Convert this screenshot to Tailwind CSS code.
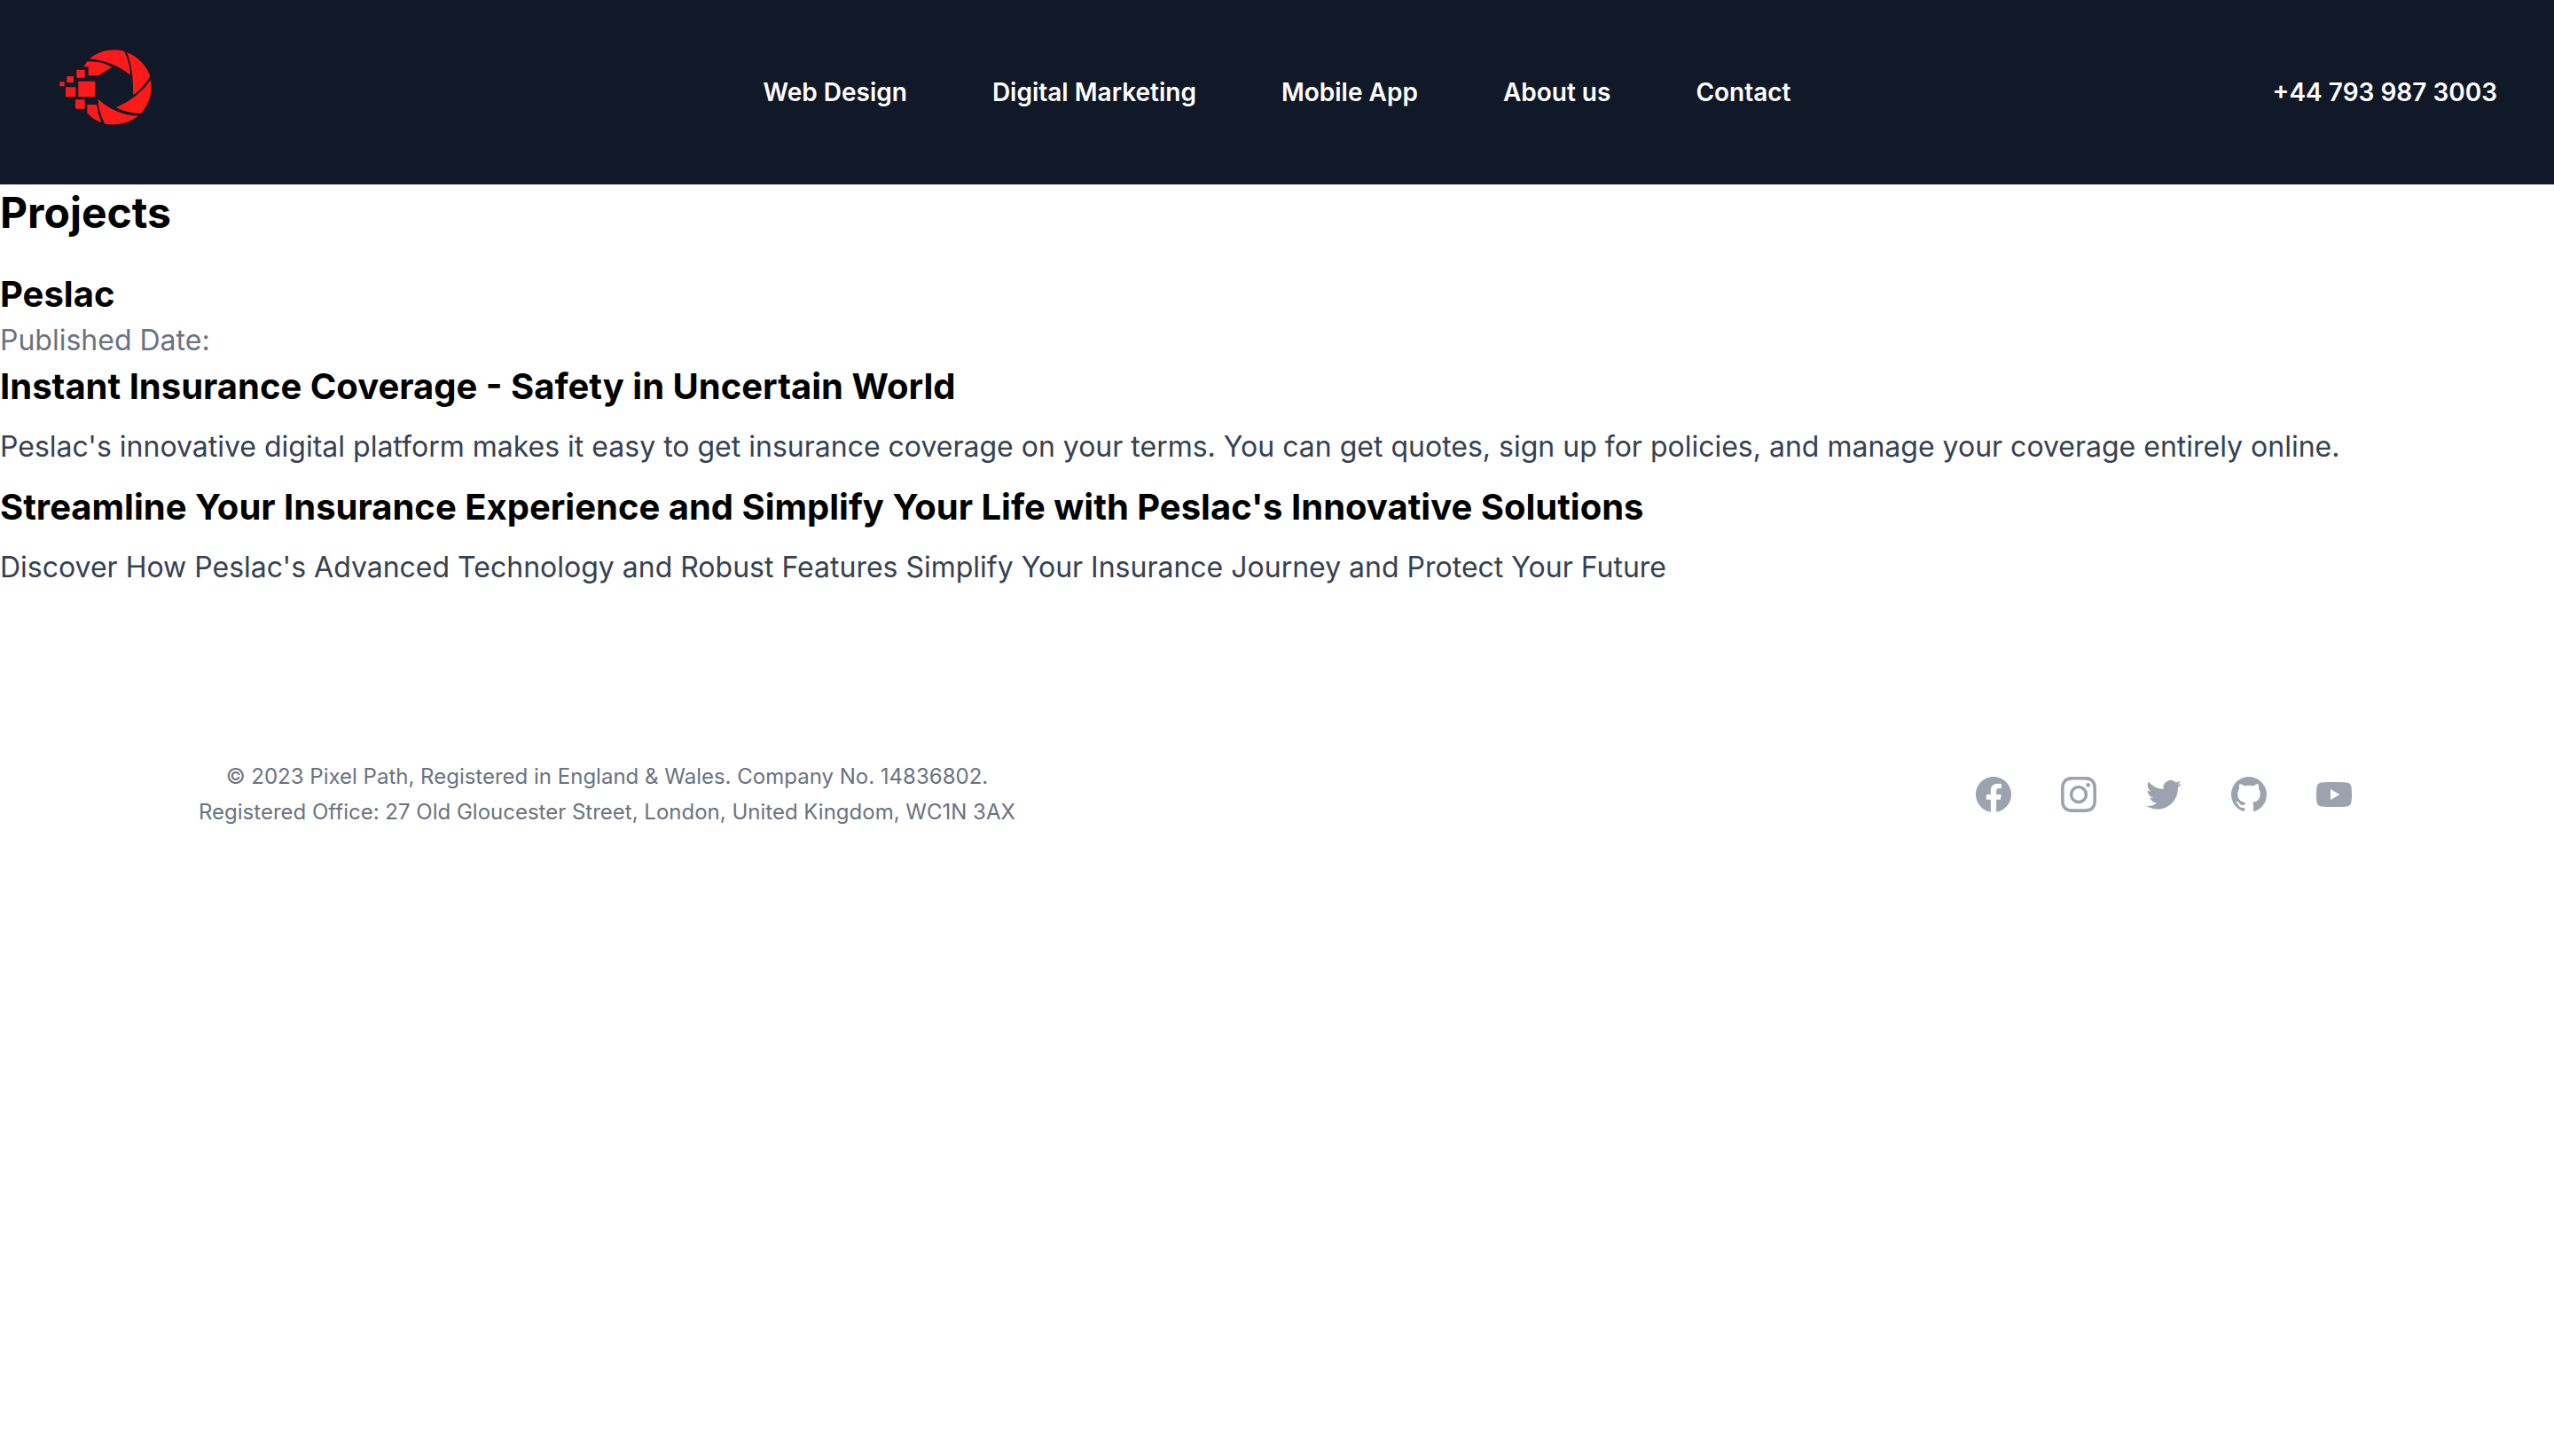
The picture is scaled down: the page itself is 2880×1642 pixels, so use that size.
<!DOCTYPE html>
<html lang="en">
<head>
<meta charset="utf-8">
<meta name="viewport" content="width=device-width, initial-scale=1">
<title>Pixel Path – Projects</title>
<script src="https://cdn.jsdelivr.net/npm/@tailwindcss/browser@4"></script>
</head>
<body class="bg-white font-['Inter',sans-serif] text-[32px] leading-[48px] text-black">
<header class="bg-[#111827]">
  <nav aria-label="Global" class="flex items-center justify-between px-16 py-12">
    <div class="flex flex-1">
      <a href="#" aria-label="Pixel Path">
        <svg class="h-28 w-28" viewBox="42 24 336 336" fill="#ff1a1a" aria-hidden="true">
          <path d="M153 79C180 55 215 47 245 49Q258 50 270 53Q289 90 291 134Q233 87 153 79Z"/>
          <path d="M279 57Q335 79 358 137Q335 178 300 202Q302 110 279 57Z"/>
          <path d="M360 151Q370 210 328 264Q285 265 243 244Q315 213 360 151Z"/>
          <path d="M182 215Q240 269 318 272Q270 309 205 299Q182 255 182 215Z"/>
          <path d="M145 234H177Q181 267 193 295Q164 284 145 262Z"/>
          <path d="M145 88Q190 86 229 107L182 136H149V106H133Z"/>
          <path d="M109 116h28v27h-28zM76 138h23v21h-23zM52 157h16v15h-16zM72 175h34v33h-34zM115 155h57v53h-57zM105 217h32v31h-32z"/>
        </svg>
      </a>
    </div>
    <div class="flex gap-24 text-[28px] leading-[48px] font-semibold text-white">
      <a href="#">Web Design</a>
      <a href="#">Digital Marketing</a>
      <a href="#">Mobile App</a>
      <a href="#">About us</a>
      <a href="#">Contact</a>
    </div>
    <div class="flex flex-1 justify-end">
      <a href="tel:+447939873003" class="text-[28px] leading-[48px] font-semibold text-white">+44 793 987 3003</a>
    </div>
  </nav>
</header>

<main>
  <h1 class="mb-8 text-[48px] leading-[64px] font-bold">Projects</h1>
  <article class="mb-24">
    <h2 class="text-[40px] leading-[56px] font-bold">Peslac</h2>
    <p class="text-[#6b7280]">Published Date:</p>
    <h3 class="text-[40px] leading-[56px] font-bold">Instant Insurance Coverage - Safety in Uncertain World</h3>
    <p class="my-4 text-[#374151]">Peslac's innovative digital platform makes it easy to get insurance coverage on your terms. You can get quotes, sign up for policies, and manage your coverage entirely online.</p>
    <h3 class="text-[40px] leading-[56px] font-bold">Streamline Your Insurance Experience and Simplify Your Life with Peslac's Innovative Solutions</h3>
    <p class="mt-4 text-[#374151]">Discover How Peslac's Advanced Technology and Robust Features Simplify Your Insurance Journey and Protect Your Future</p>
  </article>
</main>

<footer class="mx-auto flex max-w-[2560px] items-center justify-between px-16 py-24">
  <p class="text-center text-[24px] leading-[40px] text-[#6b7280]">© 2023 Pixel Path, Registered in England &amp; Wales. Company No. 14836802.<br>Registered Office: 27 Old Gloucester Street, London, United Kingdom, WC1N 3AX</p>
  <div class="flex gap-12 text-[#9ca3af]">
    <a href="#" aria-label="Facebook"><svg class="h-12 w-12" fill="currentColor" viewBox="0 0 24 24" aria-hidden="true"><path fill-rule="evenodd" d="M22 12c0-5.523-4.477-10-10-10S2 6.477 2 12c0 4.991 3.657 9.128 8.438 9.878v-6.987h-2.54V12h2.54V9.797c0-2.506 1.492-3.89 3.777-3.89 1.094 0 2.238.195 2.238.195v2.46h-1.26c-1.243 0-1.63.771-1.63 1.562V12h2.773l-.443 2.89h-2.33v6.988C18.343 21.128 22 16.991 22 12z" clip-rule="evenodd"/></svg></a>
    <a href="#" aria-label="Instagram"><svg class="h-12 w-12" fill="currentColor" viewBox="0 0 24 24" aria-hidden="true"><path fill-rule="evenodd" d="M12.315 2c2.43 0 2.784.013 3.808.06 1.064.049 1.791.218 2.427.465a4.902 4.902 0 011.772 1.153 4.902 4.902 0 011.153 1.772c.247.636.416 1.363.465 2.427.048 1.067.06 1.407.06 4.123v.08c0 2.643-.012 2.987-.06 4.043-.049 1.064-.218 1.791-.465 2.427a4.902 4.902 0 01-1.153 1.772 4.902 4.902 0 01-1.772 1.153c-.636.247-1.363.416-2.427.465-1.067.048-1.407.06-4.123.06h-.08c-2.643 0-2.987-.012-4.043-.06-1.064-.049-1.791-.218-2.427-.465a4.902 4.902 0 01-1.772-1.153 4.902 4.902 0 01-1.153-1.772c-.247-.636-.416-1.363-.465-2.427-.047-1.024-.06-1.379-.06-3.808v-.63c0-2.43.013-2.784.06-3.808.049-1.064.218-1.791.465-2.427a4.902 4.902 0 011.153-1.772A4.902 4.902 0 015.45 2.525c.636-.247 1.363-.416 2.427-.465C8.901 2.013 9.256 2 11.685 2h.63zm-.081 1.802h-.468c-2.456 0-2.784.011-3.807.058-.975.045-1.504.207-1.857.344-.467.182-.8.398-1.15.748-.35.35-.566.683-.748 1.15-.137.353-.3.882-.344 1.857-.047 1.023-.058 1.351-.058 3.807v.468c0 2.456.011 2.784.058 3.807.045.975.207 1.504.344 1.857.182.466.399.8.748 1.15.35.35.683.566 1.15.748.353.137.882.3 1.857.344 1.054.048 1.37.058 4.041.058h.08c2.597 0 2.917-.01 3.96-.058.976-.045 1.505-.207 1.858-.344.466-.182.8-.398 1.15-.748.35-.35.566-.683.748-1.15.137-.353.3-.882.344-1.857.048-1.055.058-1.37.058-4.041v-.08c0-2.597-.01-2.917-.058-3.96-.045-.976-.207-1.505-.344-1.858a3.097 3.097 0 00-.748-1.15 3.098 3.098 0 00-1.15-.748c-.353-.137-.882-.3-1.857-.344-1.023-.047-1.351-.058-3.807-.058zM12 6.865a5.135 5.135 0 110 10.27 5.135 5.135 0 010-10.27zm0 1.802a3.333 3.333 0 100 6.666 3.333 3.333 0 000-6.666zm5.338-3.205a1.2 1.2 0 110 2.4 1.2 1.2 0 010-2.4z" clip-rule="evenodd"/></svg></a>
    <a href="#" aria-label="Twitter"><svg class="h-12 w-12" fill="currentColor" viewBox="0 0 24 24" aria-hidden="true"><path d="M8.29 20.251c7.547 0 11.675-6.253 11.675-11.675 0-.178 0-.355-.012-.53A8.348 8.348 0 0022 5.92a8.19 8.19 0 01-2.357.646 4.118 4.118 0 001.804-2.27 8.224 8.224 0 01-2.605.996 4.107 4.107 0 00-6.993 3.743 11.65 11.65 0 01-8.457-4.287 4.106 4.106 0 001.27 5.477A4.072 4.072 0 012.8 9.713v.052a4.105 4.105 0 003.292 4.022 4.095 4.095 0 01-1.853.07 4.108 4.108 0 003.834 2.85A8.233 8.233 0 012 18.407a11.616 11.616 0 006.29 1.84"/></svg></a>
    <a href="#" aria-label="GitHub"><svg class="h-12 w-12" fill="currentColor" viewBox="0 0 24 24" aria-hidden="true"><path fill-rule="evenodd" d="M12 2C6.477 2 2 6.484 2 12.017c0 4.425 2.865 8.18 6.839 9.504.5.092.682-.217.682-.483 0-.237-.008-.868-.013-1.703-2.782.605-3.369-1.343-3.369-1.343-.454-1.158-1.11-1.466-1.11-1.466-.908-.62.069-.608.069-.608 1.003.07 1.531 1.032 1.531 1.032.892 1.53 2.341 1.088 2.91.832.092-.647.35-1.088.636-1.338-2.22-.253-4.555-1.113-4.555-4.951 0-1.093.39-1.988 1.029-2.688-.103-.253-.446-1.272.098-2.65 0 0 .84-.27 2.75 1.026A9.564 9.564 0 0112 6.844c.85.004 1.705.115 2.504.337 1.909-1.296 2.747-1.027 2.747-1.027.546 1.379.202 2.398.1 2.651.64.7 1.028 1.595 1.028 2.688 0 3.848-2.339 4.695-4.566 4.943.359.309.678.92.678 1.855 0 1.338-.012 2.419-.012 2.747 0 .268.18.58.688.482A10.019 10.019 0 0022 12.017C22 6.484 17.522 2 12 2z" clip-rule="evenodd"/></svg></a>
    <a href="#" aria-label="YouTube"><svg class="h-12 w-12" fill="currentColor" viewBox="0 0 24 24" aria-hidden="true"><path fill-rule="evenodd" d="M19.812 5.418c.861.23 1.538.907 1.768 1.768C21.998 8.746 22 12 22 12s0 3.255-.418 4.814a2.504 2.504 0 0 1-1.768 1.768c-1.56.419-7.814.419-7.814.419s-6.255 0-7.814-.419a2.505 2.505 0 0 1-1.768-1.768C2 15.255 2 12 2 12s0-3.255.417-4.814a2.507 2.507 0 0 1 1.768-1.768C5.744 5 11.998 5 11.998 5s6.255 0 7.814.418ZM15.194 12 10 15V9l5.194 3Z" clip-rule="evenodd"/></svg></a>
  </div>
</footer>
</body>
</html>
